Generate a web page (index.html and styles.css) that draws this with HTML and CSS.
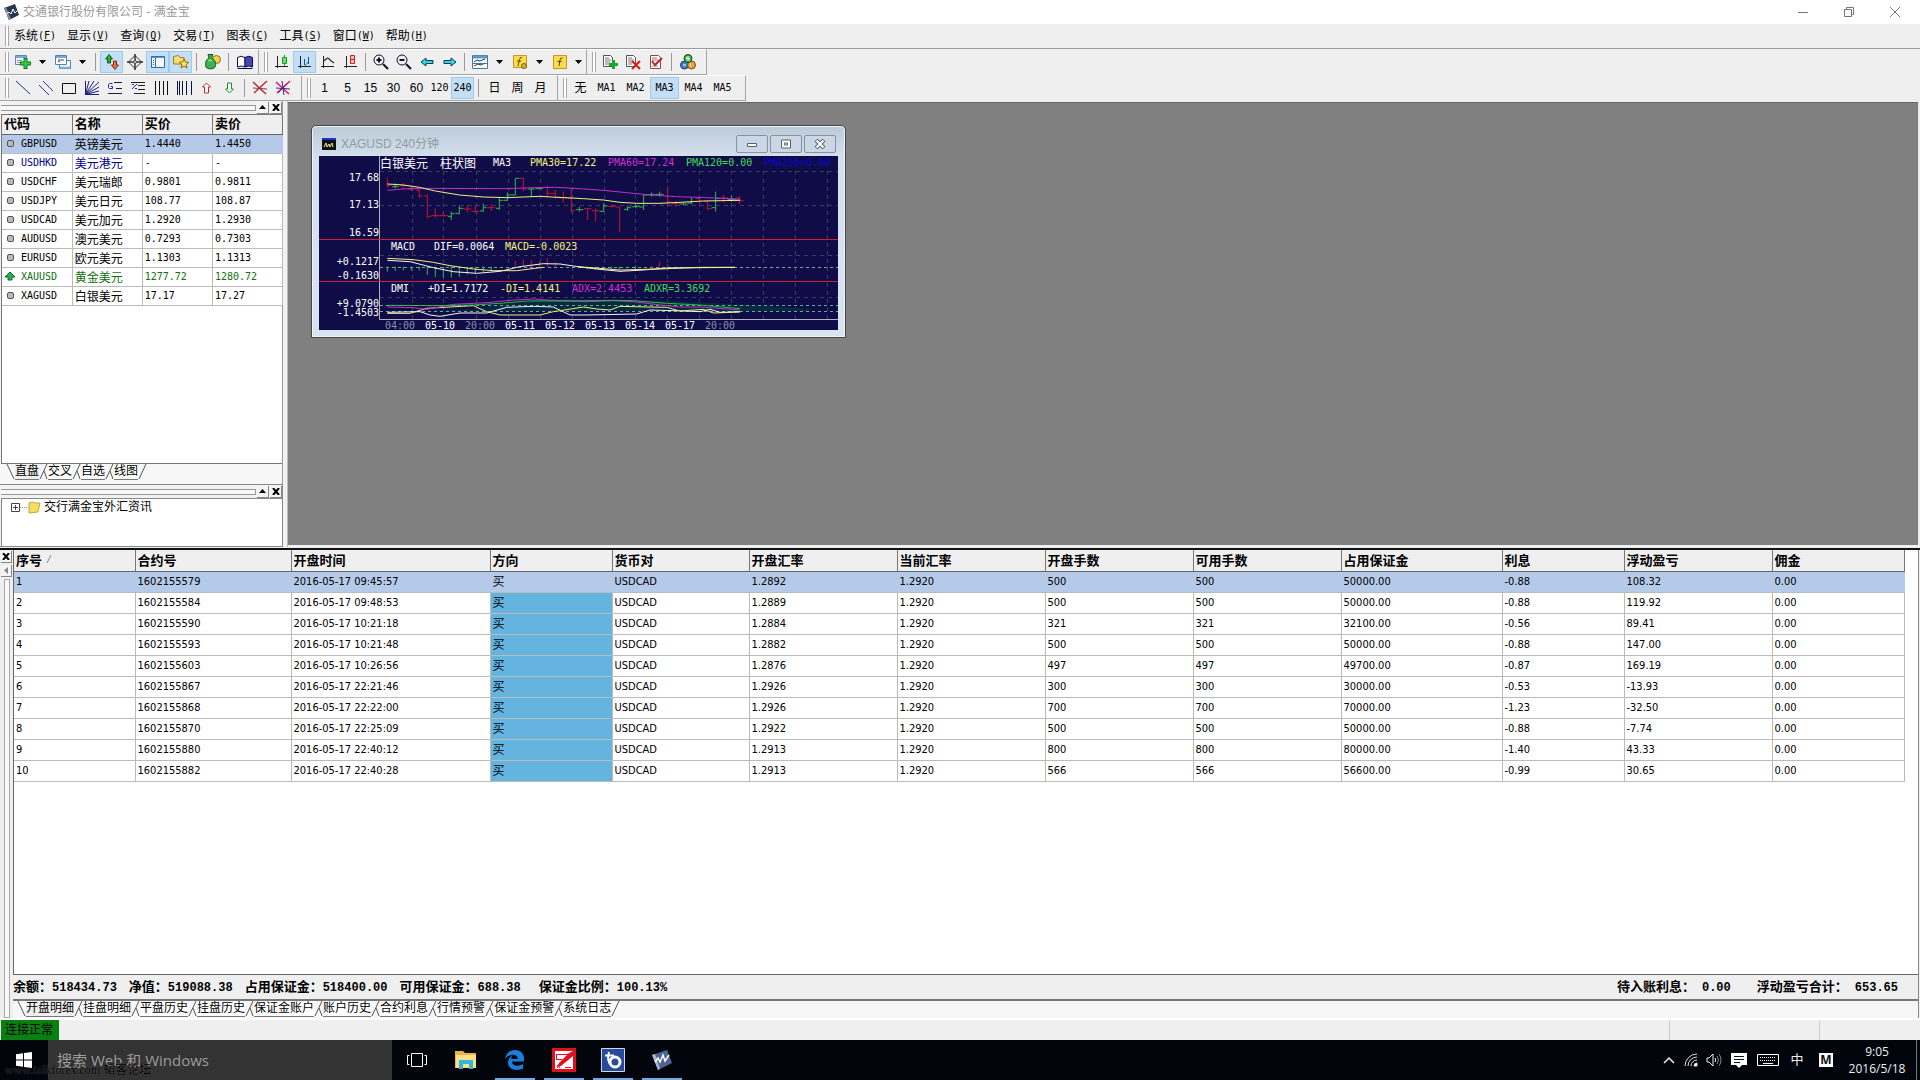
FILE: index.html
```html
<!DOCTYPE html>
<html lang="zh-CN">
<head>
<meta charset="utf-8">
<title>交通银行股份有限公司 - 满金宝</title>
<link rel="stylesheet" href="styles.css">
</head>
<body>
<header class="titlebar">
  <svg class="app-logo" width="18" height="18" viewBox="0 0 18 18"><path d="M2 5l11-4 4 11-10 5z" fill="#27374f"/><path d="M2 5l5 12 2-1L4 4z" fill="#7d8ba3"/><path d="M4 11l3-2 2 2 2-5 2 4 3-3" fill="none" stroke="#fff"/></svg>
  <span class="title-text">交通银行股份有限公司 - 满金宝</span>
  <div class="caption-buttons">
    <button aria-label="最小化"><svg width="12" height="12"><path d="M1 6.500h10" /></svg></button>
    <button aria-label="还原"><svg width="12" height="12"><path d="M1.500 3.500h7v7h-7zM3.500 3.500v-2h7v7h-2"/></svg></button>
    <button aria-label="关闭"><svg width="12" height="12"><path d="M1 1l10 10M11 1L1 11"/></svg></button>
  </div>
</header>

<nav class="menubar">
  <i class="grip"></i>
  <button>系统<span class="lat">(<u>F</u>)</span></button>
  <button>显示<span class="lat">(<u>V</u>)</span></button>
  <button>查询<span class="lat">(<u>Q</u>)</span></button>
  <button>交易<span class="lat">(<u>T</u>)</span></button>
  <button>图表<span class="lat">(<u>C</u>)</span></button>
  <button>工具<span class="lat">(<u>S</u>)</span></button>
  <button>窗口<span class="lat">(<u>W</u>)</span></button>
  <button>帮助<span class="lat">(<u>H</u>)</span></button>
</nav>

<div class="toolrow">
  <div class="toolbar tb-file">
    <i class="grip"></i>
    <button class="tool" aria-label="新建图表"><svg class="ic" viewBox="0 0 16 16"><path d="M.5 1.500h11v9H.5z" fill="#f4f8fc" stroke="#5b87b5"/><path d="M1 3h10" stroke="#7aa6d6" stroke-width="2"/><path d="M2 6.500h5M2 8.500h3" stroke="#88a"/><path d="M5 9.500h11M10.500 4v11" stroke="#0c7a1c" stroke-width="4"/><path d="M6 9.500h9M10.500 5v9" stroke="#35cf45" stroke-width="2"/></svg></button>
    <button class="drop" aria-label="更多"><svg width="7" height="4"><path d="M0 0h7L3.500 4z"/></svg></button>
    <button class="tool" aria-label="窗口"><svg class="ic" viewBox="0 0 16 16" stroke="#4f83b4" fill="#fff"><path d="M4.500 6.500h11v8h-11z"/><path d="M5 13.500h10" stroke="#8bb8e0" stroke-width="2"/><path d="M.5 1.500h11v9H.5z"/><path d="M1 3h10" stroke="#7aa6d6" stroke-width="2"/><path d="M3 6h6M3 8l2-1" stroke="#446"/></svg></button>
    <button class="drop" aria-label="更多"><svg width="7" height="4"><path d="M0 0h7L3.500 4z"/></svg></button>
    <i class="sep"></i>
    <button class="tool on" aria-label="行情"><svg class="ic" viewBox="0 0 16 16"><path d="M5 .5l3.500 4.500H6.500v4h-3V5h-2z" fill="#27ac35" stroke="#145d1c"/><path d="M11 15.500l3.500-4.500h-2V7h-3v4h-2z" fill="#e8703c" stroke="#8a2c10"/></svg></button>
    <button class="tool" aria-label="十字光标"><svg class="ic" viewBox="0 0 16 16" fill="none" stroke="#333"><path d="M8 1.500L14.500 8 8 14.500 1.500 8z"/><path d="M8 0v6M8 10v6M0 8h6M10 8h6" stroke-width="1.500"/><circle cx="8" cy="8" r="1.500"/></svg></button>
    <button class="tool on" aria-label="列表"><svg class="ic" viewBox="0 0 16 16"><path d="M1.500 2.500h13v11h-13z" fill="#f3f8ff" stroke="#2c6ea8"/><path d="M2 3.500h12" stroke="#5b9ad0"/><path d="M5.500 4v9" stroke="#2c6ea8"/><path d="M3 6.500h1M3 8.500h1M3 10.500h1" stroke="#555"/></svg></button>
    <button class="tool on" aria-label="收藏"><svg class="ic" viewBox="0 0 16 16"><path d="M.5 10V2.500l5-1L7 3.500h4V10z" fill="#f6dd7a" stroke="#9c8123"/><path d="M11 5l1.400 3 3.300.3-2.500 2.300.8 3.400-3-1.800L8 14l.8-3.400L6.300 8.300 9.600 8z" fill="#ffe44a" stroke="#8a6c12"/></svg></button>
    <i class="sep"></i>
    <button class="tool" aria-label="资金"><svg class="ic" viewBox="0 0 16 16"><circle cx="11.500" cy="5.500" r="4" fill="#f2d24a" stroke="#8b7316"/><path d="M3 .5h5L6.500 4c4 2 5 6 3.500 9-2 2.500-7 2.500-9 0-1-3-.5-7 3-9z" fill="#3fb04f" stroke="#155a20"/><path d="M3 7q2-2 4 0" stroke="#b9f0b9" fill="none"/></svg></button>
    <i class="sep"></i>
    <button class="tool" aria-label="手册"><svg class="ic" viewBox="0 0 16 16" stroke="#0d0d4a"><path d="M.5 3.500Q4 1 8 3.500v9.500q-4-2-7.500 0z" fill="#fff"/><path d="M8 3.500Q12 1 15.500 3.500V13Q12 11 8 13z" fill="#4545b5"/><path d="M.5 14.500h15" /></svg></button>
  </div>
  <div class="toolbar tb-chart">
    <i class="grip"></i>
    <button class="tool" aria-label="蜡烛图"><svg class="ic" viewBox="0 0 16 16" fill="none" stroke="#222"><path d="M3.500 2v12M1 12.500h13" /><path d="M10.500 1v11" stroke="#14a02a"/><path d="M8.500 3.500h4v6h-4z" fill="#5fe06f" stroke="#14a02a"/></svg></button>
    <button class="tool on" aria-label="柱状图"><svg class="ic" viewBox="0 0 16 16" fill="none" stroke="#222"><path d="M3.500 2v12M1 12.500h13"/><path d="M7.500 5v6h2M11.500 3v7M9.500 9h2" stroke="#155f7a"/></svg></button>
    <button class="tool" aria-label="线图"><svg class="ic" viewBox="0 0 16 16" fill="none" stroke="#222"><path d="M3.500 2v12M1 12.500h13"/><path d="M4 7q4-5 6-1l4 3" stroke="#2d4a2d" stroke-width="1.500"/></svg></button>
    <button class="tool" aria-label="美国线"><svg class="ic" viewBox="0 0 16 16" fill="none" stroke="#222"><path d="M3.500 2v12M1 12.500h13"/><path d="M7.500 1.500h4v8h-4zM7.500 5.500h4" stroke="#d02222" fill="#fbb"/></svg></button>
    <i class="sep"></i>
    <button class="tool" aria-label="放大"><svg class="ic" viewBox="0 0 16 16" fill="none" stroke="#101030"><circle cx="6" cy="6" r="5"/><path d="M3.500 6h5M6 3.500v5M10 10l5 5" stroke-width="2"/></svg></button>
    <button class="tool" aria-label="缩小"><svg class="ic" viewBox="0 0 16 16" fill="none" stroke="#101030"><circle cx="6" cy="6" r="5"/><path d="M3.500 6h5M10 10l5 5" stroke-width="2"/></svg></button>
    <button class="tool" aria-label="左移"><svg class="ic" viewBox="0 0 16 16"><path d="M2 8l5-4v2.500h7v3H7V12z" fill="#35d6e6" stroke="#063a44"/></svg></button>
    <button class="tool" aria-label="右移"><svg class="ic" viewBox="0 0 16 16"><path d="M14 8L9 4v2.500H2v3h7V12z" fill="#35d6e6" stroke="#063a44"/></svg></button>
    <i class="sep"></i>
    <button class="tool" aria-label="指标窗口"><svg class="ic" viewBox="0 0 16 16"><path d="M.5 1.500h15v13H.5z" fill="#fff" stroke="#3a79ad"/><path d="M1 3h14" stroke="#5b9ad0" stroke-width="3"/><path d="M2 8l3-2 3 1 5-2M2 12l4-2 3 1 4-2" fill="none" stroke="#333"/><path d="M1 9.500h14" stroke="#3a79ad"/></svg></button>
    <button class="drop" aria-label="更多"><svg width="7" height="4"><path d="M0 0h7L3.500 4z"/></svg></button>
    <button class="tool" aria-label="指标设置"><svg class="ic" viewBox="0 0 16 16"><path d="M1.500 1.500h13v12h-13z" fill="#f8dc4c" stroke="#c09a20"/><path d="M10 3.500q-2-.5-2.500 2L6 12M5 7h4" fill="none" stroke="#5a4508"/><circle cx="12" cy="12" r="2.500" fill="#d9b33a" stroke="#7a5c10"/></svg></button>
    <button class="drop" aria-label="更多"><svg width="7" height="4"><path d="M0 0h7L3.500 4z"/></svg></button>
    <button class="tool" aria-label="指标"><svg class="ic" viewBox="0 0 16 16"><path d="M1.500 1.500h13v13h-13z" fill="#f8dc4c" stroke="#c09a20"/><path d="M10.500 4q-2-.5-2.500 2L7 12M5.500 7.500h4" fill="none" stroke="#5a4508"/></svg></button>
    <button class="drop" aria-label="更多"><svg width="7" height="4"><path d="M0 0h7L3.500 4z"/></svg></button>
  </div>
  <div class="toolbar tb-order">
    <i class="grip"></i>
    <button class="tool" aria-label="新建委托"><svg class="ic" viewBox="0 0 16 16"><path d="M1.500 1.500h7l2 2v9h-9z" fill="#fff" stroke="#555"/><path d="M3 4h4M3 6h6M3 8h5M3 10h4" stroke="#777"/><path d="M7 10.500h9M11.500 6v9" stroke="#18a828" stroke-width="3"/></svg></button>
    <button class="tool" aria-label="撤销委托"><svg class="ic" viewBox="0 0 16 16"><path d="M1.500 1.500h7l2 2v9h-9z" fill="#fff" stroke="#555"/><path d="M3 4h4M3 6h6M3 8h5M3 10h4" stroke="#777"/><path d="M7 7l8 8M15 7l-8 8" stroke="#e01818" stroke-width="2"/></svg></button>
    <button class="tool" aria-label="确认委托"><svg class="ic" viewBox="0 0 16 16"><path d="M2.500 1.500h8l2 2v11h-10z" fill="#fff" stroke="#8a4a4a"/><path d="M4 4h5M4 6h6M4 12h6" stroke="#977"/><path d="M4 7l3 4 7-7" fill="none" stroke="#d01818" stroke-width="2"/></svg></button>
    <i class="sep"></i>
    <button class="tool" aria-label="货币"><svg class="ic" viewBox="0 0 16 16"><circle cx="4.500" cy="11" r="4" fill="#3f7fd0" stroke="#16386a"/><circle cx="11.500" cy="11" r="4" fill="#ee9b3a" stroke="#80480c"/><circle cx="8" cy="4.500" r="4" fill="#37ad48" stroke="#12551c"/><path d="M9.500 3h-3v1.500h3V6h-3M3 11h3M10.500 9.500v3" stroke="#fff" fill="none"/></svg></button>
  </div>
</div>

<div class="toolrow">
  <div class="toolbar tb-draw">
    <i class="grip"></i>
    <button class="tool" aria-label="趋势线"><svg class="ic" viewBox="0 0 16 16"><path d="M1 1l14 13" stroke="#22229a"/></svg></button>
    <button class="tool" aria-label="平行线"><svg class="ic" viewBox="0 0 16 16"><path d="M1 5l10 10M5 1l10 10" stroke="#333388"/></svg></button>
    <button class="tool" aria-label="矩形"><svg class="ic" viewBox="0 0 16 16"><path d="M1.500 3.500h13v10h-13z" fill="none" stroke="#111"/></svg></button>
    <button class="tool" aria-label="扇形线"><svg class="ic" viewBox="0 0 16 16" stroke="#1c1c80" fill="none"><path d="M1.500 1v13.500H15M1.500 14.500L5 1M1.500 14.500L10 1M1.500 14.500L15 2M1.500 14.500L15 7M1.500 14.500L15 11"/></svg></button>
    <button class="tool" aria-label="黄金分割"><svg class="ic" viewBox="0 0 16 16" fill="none" stroke="#222"><path d="M1 13.500h14M9 8.500h6M7 2.500h8"/><path d="M5.500 3.500H2.500l-1 1v3l1 1h3v-2H4" stroke="#2222b0"/></svg></button>
    <button class="tool" aria-label="百分比线"><svg class="ic" viewBox="0 0 16 16" fill="none" stroke="#222"><path d="M1 2.500h14M8 5.500h7M8 9.500h7M4 13.500h11"/><path d="M2 9l5-5M2 4.500h2M5 8.500h2" stroke="#2222b0"/></svg></button>
    <button class="tool" aria-label="周期线"><svg class="ic" viewBox="0 0 16 16"><path d="M2.500 1v14M6.500 1v14M10.500 1v14M14.500 1v14" stroke="#111"/></svg></button>
    <button class="tool" aria-label="斐波那契周期"><svg class="ic" viewBox="0 0 16 16"><path d="M1.500 1v14M3.500 1v14M6.500 1v14M10.500 1v14M15.500 1v14" stroke="#111144"/></svg></button>
    <button class="tool" aria-label="上箭头"><svg class="ic" viewBox="0 0 16 16"><path d="M7.500 3l4 4H9.500v6h-4V7h-2z" fill="#fff" stroke="#d02020"/></svg></button>
    <button class="tool" aria-label="下箭头"><svg class="ic" viewBox="0 0 16 16"><path d="M7.500 13l4-4H9.500V3h-4v6h-2z" fill="#fff" stroke="#149024"/></svg></button>
    <i class="sep"></i>
    <button class="tool" aria-label="删除"><svg class="ic" viewBox="0 0 16 16"><path d="M1 2l13 12M15 1L2 13" stroke="#d02030" stroke-width="1.500"/><path d="M1 8l14 1" stroke="#555"/></svg></button>
    <button class="tool" aria-label="全部删除"><svg class="ic" viewBox="0 0 16 16"><path d="M1 2l13 12M15 1L2 13" stroke="#d02060" stroke-width="1.500"/><path d="M1 8l14 1M7 1l2 14M3 13L12 4" stroke="#4a2090"/></svg></button>
  </div>
  <div class="toolbar tb-period">
    <i class="grip"></i>
    <button class="tool">1</button><button class="tool">5</button><button class="tool">15</button><button class="tool">30</button><button class="tool">60</button><button class="tool lat">120</button><button class="tool on lat">240</button>
    <i class="sep"></i>
    <button class="tool">日</button><button class="tool">周</button><button class="tool">月</button>
  </div>
  <div class="toolbar tb-ma">
    <i class="grip"></i>
    <button class="tool">无</button><button class="tool ma">MA1</button><button class="tool ma">MA2</button><button class="tool ma on">MA3</button><button class="tool ma">MA4</button><button class="tool ma">MA5</button>
  </div>
</div>

<main class="workspace">
  <aside class="side">
    <section class="quotes">
      <div class="dockbar"><i></i><button aria-label="收起"><svg width="7" height="4"><path d="M0 4h7L3.500 0z"/></svg></button><button aria-label="关闭"><svg width="8" height="7"><path d="M1 0l6 7M7 0L1 7" stroke="#000" stroke-width="2"/></svg></button></div>
      <div class="quote-list">
        <table class="qt">
          <thead><tr><th>代码</th><th>名称</th><th>买价</th><th>卖价</th></tr></thead>
          <tbody>
            <tr class="sel"><td><i class="dot"></i>GBPUSD</td><td>英镑美元</td><td>1.4440</td><td>1.4450</td></tr>
            <tr class="blue"><td><i class="dot"></i>USDHKD</td><td>美元港元</td><td>-</td><td>-</td></tr>
            <tr><td><i class="dot"></i>USDCHF</td><td>美元瑞郎</td><td>0.9801</td><td>0.9811</td></tr>
            <tr><td><i class="dot"></i>USDJPY</td><td>美元日元</td><td>108.77</td><td>108.87</td></tr>
            <tr><td><i class="dot"></i>USDCAD</td><td>美元加元</td><td>1.2920</td><td>1.2930</td></tr>
            <tr><td><i class="dot"></i>AUDUSD</td><td>澳元美元</td><td>0.7293</td><td>0.7303</td></tr>
            <tr><td><i class="dot"></i>EURUSD</td><td>欧元美元</td><td>1.1303</td><td>1.1313</td></tr>
            <tr class="green"><td><svg class="up" width="12" height="10"><path d="M6 1l5 5H8v3H4V6H1z" fill="#28b050" stroke="#0c6a28"/></svg>XAUUSD</td><td>黄金美元</td><td>1277.72</td><td>1280.72</td></tr>
            <tr><td><i class="dot"></i>XAGUSD</td><td>白银美元</td><td>17.17</td><td>17.27</td></tr>
          </tbody>
        </table>
      </div>
      <div class="tabs side-tabs">
        <svg class="cut" width="9" height="16"><path d="M1 0l7 15"/></svg><button class="active">直盘</button><svg class="cut" width="9" height="16"><path d="M8 0L1 15M5 7l3 8"/></svg><button>交叉</button><svg class="cut" width="9" height="16"><path d="M8 0L1 15M5 7l3 8"/></svg><button>自选</button><svg class="cut" width="9" height="16"><path d="M8 0L1 15M5 7l3 8"/></svg><button>线图</button><svg class="cut" width="9" height="16"><path d="M8 0L1 15"/></svg>
      </div>
    </section>
    <section class="news">
      <div class="dockbar"><i></i><button aria-label="收起"><svg width="7" height="4"><path d="M0 4h7L3.500 0z"/></svg></button><button aria-label="关闭"><svg width="8" height="7"><path d="M1 0l6 7M7 0L1 7" stroke="#000" stroke-width="2"/></svg></button></div>
      <div class="tree">
        <svg width="32" height="16"><path d="M1.500 4.500h8v8h-8zM3 8.500h5M5.500 6v5" fill="#fff" stroke="#444"/><path d="M10 8.500h8" stroke="#999" stroke-dasharray="1 1"/><path d="M19 4l4-1 1 1h6l-2 9-9 1z" fill="#f5dc62" stroke="#c2a83e"/></svg>
        <span>交行满金宝外汇资讯</span>
      </div>
    </section>
  </aside>
  <section class="mdi">
    <div class="child">
      <header class="child-title">
        <svg width="14" height="12"><path d="M0 0h14v12H0z" fill="#111"/><path d="M0 0h14v2H0z" fill="#2233cc"/><path d="M2 9l2-4 1 4 2-3 1 3 2-4 1 4" fill="none" stroke="#f5e6a0"/></svg>
        <span>XAGUSD 240分钟</span>
        <button aria-label="最小化"><svg width="12" height="10"><path d="M1.500 4.500h9v3h-9z" fill="#fff" stroke="#555e6b"/></svg></button>
        <button aria-label="最大化"><svg width="12" height="10"><path d="M1.500 1h9v8h-9z" fill="#fff" stroke="#555e6b"/><path d="M4.500 4h3v2h-3z" fill="#fff" stroke="#555e6b"/></svg></button>
        <button aria-label="关闭"><svg width="12" height="10"><path d="M2 1l8 8M10 1L2 9" stroke="#555e6b" stroke-width="4"/><path d="M2.500 1.500l7 7M9.500 1.500l-7 7" stroke="#fff" stroke-width="2"/></svg></button>
      </header>
      <svg class="chart" viewBox="0 0 519 174" role="img" aria-label="白银美元 柱状图">
        <g class="grid"><path d="M93.500 15v148M124.500 15v148M157.500 15v148M189.500 15v148M221.500 15v148M253.500 15v148M285.500 15v148M316.500 15v148M348.500 15v148M380.500 15v148M412.500 15v148M444.500 15v148M476.500 15v148M508.500 15v148M61 15.500h458M61 49.500h458M61 99.500h458M61 141.500h458"/></g>
        <path d="M181 148l60-5 110 2 80 4 60 4v2H100l60-2z" fill="#082a40"/>
        <path class="zero" d="M61 111.500h458M61 149.500h458M61 155.500h458"/>
        <path class="axis" d="M60.500 0v163.500H519"/>
        <path class="split" d="M0 83.500h519M0 125.500h519"/>
        <g class="plot" transform="translate(-19 -41) scale(.333333)">
          <path class="r" d="M262 188v30M262 212h10M310 205v17M300 212h20M334 210v18M324 222h20M358 218v30M348 225h10M358 243h10M382 238v72M372 243h10M382 304h12M406 280v28M394 302h24M430 290v15M418 302h26M502 270v22M490 282h24M526 270v23M514 289h24M574 268v20M562 278h24M670 188v40M660 190h10M670 222h10M742 212v33M732 217h10M742 235h12M766 225v27M754 235h12M766 246h12M790 230v32M778 248h24M814 222v70M804 250h10M814 286h12M863 280v35M852 281h22M887 280v40M876 287h22M935 270v8M923 274h24M959 275v75M947 276h12M1103 215v55M1103 260h10M1127 258v17M1115 266h24M1199 245v20M1187 250h12M1223 258v27M1212 259h11M1223 281h12M1271 240v22M1260 249h24M1319 243v25M1307 249h12M1319 257h12"/>
          <path class="g" d="M286 205v15M276 215h20M454 290v25M444 304h10M454 296h10M478 272v26M466 295h12M478 280h12M550 266v24M540 288h10M550 278h10M598 248v37M588 280h10M598 256h10M622 232v26M610 256h12M622 240h12M646 190v50M634 240h12M646 190h12M694 220v25M684 222h22M718 218v4M708 221h20M838 275v15M828 284h22M911 265v25M899 289h12M911 273h10M983 273v15M972 283h12M983 278h10M1007 268v12M995 275h24M1031 240v45M1019 276h12M1031 240h12M1055 232v13M1043 239h24M1079 230v15M1067 238h24M1151 262v8M1139 267h24M1175 248v20M1163 264h12M1247 230v60M1235 278h12M1247 250h12M1295 242v18M1283 253h24"/>
          <path class="m" d="M262 226l48-4 50-2 260 1 80-3 70-1 70 4 70 5 70 7 70 7 80 5 120 4 70 4"/>
          <path class="y" d="M262 207l48 3 48 7 48 11 72 12 72 6 72 2 48-2 50-2 50 3 45 2 35 2 60 4 50 7 50 3h70l60-3 70-4 110-2"/>
          <path class="g" d="M262 455v15M286 455v13M310 455v11M334 455v12M358 455v11M382 455v25M406 455v31M430 455v33M454 455v33M478 455v31M502 455v23M526 455v19M550 455v16M574 455v12M862 455v8M886 455v10M934 455v8M958 455v8M1006 452v12"/>
          <path class="r" d="M646 455v-17M670 455v-22M694 455v-20M718 455v-15M742 455v-25M766 455v-15M1055 462v-10M1079 462v-22M1103 458v-10"/>
          <path class="w" d="M262 436l68 4 70 18 60 12 70 5 70-6 60-14 70-9 50 1 60 9 60 7 60 6 70-4 70-6 205-2"/>
          <path class="y" d="M262 430l78 4 60 8 50 10 70 10 60 5h70l80-10M834 455l126 10 120-3 120-5h105"/>
          <path class="w" d="M262 592l98-2 30 10 30 4 60-10h80l60-17 80-3 60 2 50 24h50l150-3 40-12 100 3 50 2 30-7 30 9 60-2"/>
          <path class="y" d="M262 595h68l50-15 140-8 40 18 40 10h120l40-10 40-6 50-8 40 6 40 3 30-11 80 2 60 1 40 11 70-5 30 11 80-3"/>
          <path class="m" d="M262 576l78 2 40 5 80-15 100-5 80-8 60-3 60 4 100 4 80-3 60 3 80 10 60 6h60l120 9"/>
          <path class="g" d="M262 571l138 1 120-2 80-5 80-7h130l130-2 60 1 100 8 100 5 120 11"/>
        </g>
        <g class="cjk"><text x="61" y="12">白银美元</text><text x="121" y="12">柱状图</text></g>
        <g class="lbl">
          <text x="174" y="10">MA3</text><text class="ty" x="211" y="10">PMA30=17.22</text><text class="tm" x="289" y="10">PMA60=17.24</text><text class="tg" x="367" y="10">PMA120=0.00</text><text class="tb" x="445" y="10">PMA250=0.00</text>
          <text x="72" y="94">MACD</text><text x="115" y="94">DIF=0.0064</text><text class="ty" x="186" y="94">MACD=-0.0023</text>
          <text x="72" y="136">DMI</text><text x="109" y="136">+DI=1.7172</text><text class="ty" x="181" y="136">-DI=1.4141</text><text class="tm" x="253" y="136">ADX=2.4453</text><text class="tg" x="325" y="136">ADXR=3.3692</text>
          <g text-anchor="end"><text x="60" y="25">17.68</text><text x="60" y="52">17.13</text><text x="60" y="80">16.59</text><text x="60" y="109">+0.1217</text><text x="60" y="123">-0.1630</text><text x="60" y="151">+9.0790</text><text x="60" y="160">-1.4503</text></g>
          <text class="dim" x="66" y="173">04:00</text><text x="106" y="173">05-10</text><text class="dim" x="146" y="173">20:00</text><text x="186" y="173">05-11</text><text x="226" y="173">05-12</text><text x="266" y="173">05-13</text><text x="306" y="173">05-14</text><text x="346" y="173">05-17</text><text class="dim" x="386" y="173">20:00</text>
        </g>
      </svg>
    </div>
  </section>
</main>

<section class="orders">
  <div class="dockside"><button aria-label="关闭"><svg width="8" height="7"><path d="M1 0l6 7M7 0L1 7" stroke="#000" stroke-width="2"/></svg></button><button aria-label="收起"><svg width="4" height="7"><path d="M4 0v7L0 3.500z" fill="#888"/></svg></button><i></i></div>
  <div class="orders-body">
    <div class="grid-wrap">
      <table class="ot">
        <colgroup><col class="c1"><col class="c2"><col class="c3"><col class="c4"><col class="c5"><col class="c6"><col class="c7"><col class="c8"><col class="c9"><col class="c10"><col class="c11"><col class="c12"><col></colgroup>
        <thead><tr><th>序号<svg class="sort" width="8" height="8"><path d="M1 8l4-8" stroke="#888"/></svg></th><th>合约号</th><th>开盘时间</th><th>方向</th><th>货币对</th><th>开盘汇率</th><th>当前汇率</th><th>开盘手数</th><th>可用手数</th><th>占用保证金</th><th>利息</th><th>浮动盈亏</th><th>佣金</th></tr></thead>
        <tbody>
          <tr class="sel"><td>1</td><td>1602155579</td><td>2016-05-17 09:45:57</td><td>买</td><td>USDCAD</td><td>1.2892</td><td>1.2920</td><td>500</td><td>500</td><td>50000.00</td><td>-0.88</td><td>108.32</td><td>0.00</td></tr>
          <tr><td>2</td><td>1602155584</td><td>2016-05-17 09:48:53</td><td>买</td><td>USDCAD</td><td>1.2889</td><td>1.2920</td><td>500</td><td>500</td><td>50000.00</td><td>-0.88</td><td>119.92</td><td>0.00</td></tr>
          <tr><td>3</td><td>1602155590</td><td>2016-05-17 10:21:18</td><td>买</td><td>USDCAD</td><td>1.2884</td><td>1.2920</td><td>321</td><td>321</td><td>32100.00</td><td>-0.56</td><td>89.41</td><td>0.00</td></tr>
          <tr><td>4</td><td>1602155593</td><td>2016-05-17 10:21:48</td><td>买</td><td>USDCAD</td><td>1.2882</td><td>1.2920</td><td>500</td><td>500</td><td>50000.00</td><td>-0.88</td><td>147.00</td><td>0.00</td></tr>
          <tr><td>5</td><td>1602155603</td><td>2016-05-17 10:26:56</td><td>买</td><td>USDCAD</td><td>1.2876</td><td>1.2920</td><td>497</td><td>497</td><td>49700.00</td><td>-0.87</td><td>169.19</td><td>0.00</td></tr>
          <tr><td>6</td><td>1602155867</td><td>2016-05-17 22:21:46</td><td>买</td><td>USDCAD</td><td>1.2926</td><td>1.2920</td><td>300</td><td>300</td><td>30000.00</td><td>-0.53</td><td>-13.93</td><td>0.00</td></tr>
          <tr><td>7</td><td>1602155868</td><td>2016-05-17 22:22:00</td><td>买</td><td>USDCAD</td><td>1.2926</td><td>1.2920</td><td>700</td><td>700</td><td>70000.00</td><td>-1.23</td><td>-32.50</td><td>0.00</td></tr>
          <tr><td>8</td><td>1602155870</td><td>2016-05-17 22:25:09</td><td>买</td><td>USDCAD</td><td>1.2922</td><td>1.2920</td><td>500</td><td>500</td><td>50000.00</td><td>-0.88</td><td>-7.74</td><td>0.00</td></tr>
          <tr><td>9</td><td>1602155880</td><td>2016-05-17 22:40:12</td><td>买</td><td>USDCAD</td><td>1.2913</td><td>1.2920</td><td>800</td><td>800</td><td>80000.00</td><td>-1.40</td><td>43.33</td><td>0.00</td></tr>
          <tr><td>10</td><td>1602155882</td><td>2016-05-17 22:40:28</td><td>买</td><td>USDCAD</td><td>1.2913</td><td>1.2920</td><td>566</td><td>566</td><td>56600.00</td><td>-0.99</td><td>30.65</td><td>0.00</td></tr>
        </tbody>
      </table>
    </div>
    <div class="summary">
      <span>余额：<b>518434.73</b></span><span>净值：<b>519088.38</b></span><span>占用保证金：<b>518400.00</b></span><span>可用保证金：<b>688.38</b></span><span class="ratio">保证金比例：<b>100.13%</b></span>
      <span class="push">待入账利息：<b>0.00</b></span><span class="last">浮动盈亏合计：<b>653.65</b></span>
    </div>
    <div class="tabs">
      <svg class="cut" width="9" height="16"><path d="M1 0l7 15"/></svg><button class="active">开盘明细</button><svg class="cut" width="9" height="16"><path d="M8 0L1 15M5 7l3 8"/></svg><button>挂盘明细</button><svg class="cut" width="9" height="16"><path d="M8 0L1 15M5 7l3 8"/></svg><button>平盘历史</button><svg class="cut" width="9" height="16"><path d="M8 0L1 15M5 7l3 8"/></svg><button>挂盘历史</button><svg class="cut" width="9" height="16"><path d="M8 0L1 15M5 7l3 8"/></svg><button>保证金账户</button><svg class="cut" width="9" height="16"><path d="M8 0L1 15M5 7l3 8"/></svg><button>账户历史</button><svg class="cut" width="9" height="16"><path d="M8 0L1 15M5 7l3 8"/></svg><button>合约利息</button><svg class="cut" width="9" height="16"><path d="M8 0L1 15M5 7l3 8"/></svg><button>行情预警</button><svg class="cut" width="9" height="16"><path d="M8 0L1 15M5 7l3 8"/></svg><button>保证金预警</button><svg class="cut" width="9" height="16"><path d="M8 0L1 15M5 7l3 8"/></svg><button>系统日志</button><svg class="cut" width="9" height="16"><path d="M8 0L1 15"/></svg>
    </div>
  </div>
</section>

<footer class="statusbar"><span class="conn">连接正常</span><i class="pane wide"></i><i class="pane"></i></footer>

<div class="taskbar">
  <button class="start" aria-label="开始"><svg width="16" height="16" fill="#fff"><path d="M0 2.300L7 1.300v6.200H0zM8 1.100L16 0v7.500H8zM0 8.500h7v6.200l-7-1zM8 8.500h8V16l-8-1.100z"/></svg></button>
  <input class="search" type="text" aria-label="搜索" placeholder="搜索 Web 和 Windows">
  <button class="task" aria-label="任务视图"><svg width="20" height="16" fill="none" stroke="#fff"><path d="M4.500 1.500h11v13h-11zM2.500 3.500h-2v9h2M17.500 3.500h2v9h-2"/></svg></button>
  <button class="task" aria-label="文件资源管理器"><svg width="22" height="20"><path d="M0 1h8l2 2h11v15H0z" fill="#e8b64c"/><path d="M1 5h20v13H1z" fill="#fbe08a"/><path d="M4 10h14v9h-4v-5H8v5H4z" fill="#35b5d8"/></svg></button>
  <button class="task run" aria-label="Edge"><svg width="22" height="22"><path d="M1 10C2 4 6 1 11 1c6 0 9 4 9 9v2.500H8c.3 5 6.500 5 11 2.500v4.500c-6 3-15 1.500-15-6 0-4 2.500-6 5-7-1.500 1.500-1.700 2.500-1.700 3.500h6.500c0-6-8.800-5.500-12.800 0z" fill="#1a7fdc"/></svg></button>
  <button class="task run" aria-label="行情软件"><svg width="24" height="24"><path d="M0 0h24v24H0z" fill="#e01020"/><path d="M3 3h18v18H3z" fill="#fff"/><path d="M4 6.500h12M4.500 6v5M4 11.500h6M5 17l3 3M8 17l-3 3M13 19.500h6" stroke="#e01020"/><path d="M21 3v5L9 18l-4 1 2-4L17 5z" fill="#e01020"/></svg></button>
  <button class="task run" aria-label="交通银行"><svg width="24" height="24"><path d="M.5.500h23v23H.5z" fill="#274a9c" stroke="#cfd9ee"/><path d="M4 7.500h9M8 4q-3 9 3 14" fill="none" stroke="#fff" stroke-width="2"/><circle cx="14" cy="14" r="5" fill="none" stroke="#fff" stroke-width="3"/></svg></button>
  <button class="task run" aria-label="满金宝"><svg width="22" height="22"><path d="M1 6l15-5 5 13-14 7z" fill="#4d6594"/><path d="M1 6l6 15 2-1L4 5z" fill="#a8b7d2"/><path d="M4 13l3-4 2 4 3-7 2 6 4-6" fill="none" stroke="#fff" stroke-width="1.500"/></svg></button>
  <div class="tray">
    <svg width="14" height="24"><path d="M2 15l5-5 5 5" fill="none" stroke="#eee" stroke-width="1.500"/></svg>
    <svg width="14" height="24" fill="none" stroke="#ddd"><path d="M1 18A12 12 0 0 1 13 6M4 18a9 9 0 0 1 9-9M7 18a6 6 0 0 1 6-6"/><path d="M10 18a3 3 0 0 1 3-3v3z" fill="#fff"/></svg>
    <svg width="16" height="24" fill="none" stroke="#eee"><path d="M1 10h2l4-4v12l-4-4H1zM9 10q1.500 2 0 4"/><path d="M11 8q3 4 0 8M13 6q4 6 0 12" stroke="#888"/></svg>
    <svg width="18" height="24"><path d="M1 5h16v12h-5l-3 3-3-3H1z" fill="#fff"/><path d="M4 8.500h10M4 11.500h10M4 14.500h6" stroke="#111"/></svg>
    <svg width="24" height="24" fill="none" stroke="#fff"><path d="M1.500 6.500h21v11h-21z"/><path d="M4 9.500h16M4 12.500h16" stroke-dasharray="1 1"/><path d="M7 15.500h10"/></svg>
    <span class="ime">中</span>
    <span class="imode">M</span>
    <div class="clock"><span>9:05</span><span>2016/5/18</span></div>
    <i class="peek"></i>
  </div>
  <span class="mark">www.talkforex.com 韬客论坛</span>
</div>
</body>
</html>
```
FILE: styles.css
```css
* { box-sizing: border-box; }
body { margin: 0; height: 100vh; display: flex; flex-direction: column; overflow: hidden; background: #efefef; color: #000; font: 12px/16px "Liberation Sans", "Noto Sans CJK SC", sans-serif; }
button { display: flex; align-items: center; justify-content: center; margin: 0; padding: 0; border: 0; background: none; color: inherit; font: inherit; white-space: nowrap; flex: none; }
svg { display: block; flex: none; }
table { border-collapse: collapse; table-layout: fixed; }
th, td { padding: 0; text-align: left; white-space: nowrap; overflow: hidden; }
.lat { font-family: "DejaVu Sans Mono", monospace; font-size: 10px; }

.titlebar { display: flex; align-items: center; flex: none; height: 24px; background: #fff; color: #999; }
.app-logo { margin: 0 3px 0 2px; }
.caption-buttons { display: flex; margin-left: auto; padding-right: 2px; }
.caption-buttons button { width: 46px; height: 20px; }
.caption-buttons svg { fill: none; stroke: #777; }

.menubar { display: flex; align-items: center; gap: 11px; flex: none; height: 25px; border-bottom: 1px solid #999; }
.menubar .grip { margin-right: -6px; }
.grip { flex: none; width: 4px; height: 20px; margin: 0 2px 0 5px; border: solid #a8a8a8; border-width: 0 1px; background: #fff; }

.toolrow { display: flex; flex: none; height: 26px; }
.toolbar { display: flex; align-items: center; flex: none; height: 26px; border: solid #a5a5a5; border-width: 0 1px 1px 0; border-top: 1px solid #fff; }
.tool { width: 23px; height: 22px; border: 1px solid transparent; }
.tool.on { background: #c4dff5; border-color: #9ccbf0; }
.ic { width: 16px; height: 16px; }
.drop { width: 17px; height: 22px; }
.sep { flex: none; width: 1px; height: 18px; margin: 0 4px; background: #999; }
.tb-file { width: 259px; }
.tb-chart { width: 328px; }
.tb-chart .sep, .tb-draw .sep { margin: 0 3px; }
.tb-chart .drop:last-child { flex: 0 1 17px; }
.tb-order { width: 120px; }
.tb-draw { width: 302px; }
.tb-period { width: 256px; }
.tb-ma { width: 188px; }
.tool.ma { width: 29px; font: 10px/16px "DejaVu Sans Mono", monospace; }

.workspace { display: flex; flex: none; height: 446px; }
.side { display: flex; flex-direction: column; flex: none; width: 288px; padding-right: 4px; border-right: 1px solid #bbb; background: #f2f2f2; }
.quotes { display: flex; flex-direction: column; flex: 1; border-right: 1px solid #999; }
.news { display: flex; flex-direction: column; flex: none; height: 63px; border: 1px solid #888; border-left: 0; }
.dockbar { display: flex; align-items: center; flex: none; height: 13px; }
.dockbar i { flex: 1; height: 6px; margin-left: 1px; border: 1px solid #999; border-left: 0; background: #f8f8f8; }
.dockbar button { width: 12px; height: 12px; margin-left: 1px; border: solid #888; border-width: 0 1px 1px 0; background: #f4f4f4; }
.quote-list { flex: 1; margin-left: 1px; border: solid #777; border-width: 1px 0 1px 1px; background: #fff; }
.qt { width: 281px; }
.qt th { height: 19px; padding-left: 2px; font-size: 13px; line-height: 16px; background: #efefef; border-right: 1px solid #777; border-bottom: 1px solid #666; }
.qt td { height: 19px; padding-left: 2px; font: 10px/16px "DejaVu Sans Mono", monospace; border-right: 1px solid #bbb; border-bottom: 1px solid #bbb; }
.qt td:nth-child(2) { font: 12px/16px "Noto Sans CJK SC", sans-serif; }
.qt .sel td, .ot .sel td { background: #b5c9e8; border-right-color: #b5c9e8; }
.blue { color: #000090; }
.green { color: #107010; }
.dot { display: inline-block; width: 7px; height: 7px; margin: 0 7px 0 3px; border: 1px solid #555; border-radius: 2px; background: #bbb; }
.up { display: inline-block; margin: 0 5px 0 0; vertical-align: -1px; }

.tabs { display: flex; align-items: flex-start; flex: none; background: #f7f7f7; }
.tabs button { height: 16px; line-height: 15px; background: #fff; border-bottom: 1px solid #777; }
.tabs .active { background: #efefef; }
.cut { fill: none; stroke: #555; }
.side-tabs { height: 20px; padding-left: 6px; }
.tree { display: flex; flex: 1; padding: 0 0 0 10px; gap: 2px; margin-left: 1px; border: solid #888; border-width: 1px 0 0 1px; background: #fff; }
.tree svg { margin-left: -2px; }

.mdi { position: relative; flex: 1; margin: 1px 2px 2px 0; background: #808080; border-top: 1px solid #666; }
.child { position: absolute; left: 23px; top: 22px; width: 535px; padding: 0 7px 7px; background: linear-gradient(#bccad8, #d3dfec 31px, #d8e4f2); border: 1px solid #44484e; border-radius: 5px 5px 0 0; box-shadow: inset 0 0 0 1px #eef4fa; }
.child-title { display: flex; align-items: center; gap: 2px; height: 30px; padding: 6px 2px 0 3px; color: #949ba3; font-size: 12px; }
.child-title span { flex: 1; padding-left: 3px; }
.child-title button { width: 32px; height: 18px; border: 1px solid #8593a3; border-radius: 2px; background: #cbd7e4; }
.chart { width: 100%; overflow: visible; background: #100c48; }
.grid { fill: none; stroke: #3c3c60; stroke-dasharray: 4 4; }
.zero { stroke: #5fae9a; stroke-dasharray: 3 3; }
.axis { fill: none; stroke: #b0b0c0; }
.split { stroke: #d01c34; shape-rendering: crispEdges; }
.plot { fill: none; stroke-width: 3; }
.r { stroke: #c01830; } .g { stroke: #2fb848; } .y { stroke: #efef80; } .m { stroke: #c030c8; } .w { stroke: #f4f4f4; }
.lbl { fill: #fff; font: 10px "DejaVu Sans Mono", monospace; }
.cjk { fill: #fff; font: 12px "Noto Sans CJK SC", sans-serif; }
.ty { fill: #f4f478; } .tm { fill: #d030d0; } .tg { fill: #40dc58; } .tb { fill: #0808c8; } .dim { fill: #8c8ca4; }

.orders { display: flex; flex: 1; min-height: 0; border-top: 2px solid #111; margin-top: 1px; }
.dockside { display: flex; flex-direction: column; align-items: center; gap: 2px; flex: none; width: 13px; padding-top: 1px; }
.dockside button { width: 11px; height: 12px; border: solid #888; border-width: 0 1px 1px 0; background: #f4f4f4; }
.dockside i { flex: 1; width: 6px; border: 1px solid #aaa; background: #f8f8f8; }
.orders-body { display: flex; flex-direction: column; flex: 1; min-width: 0; margin-right: 1px; border-right: 1px solid #888; }
.grid-wrap { flex: 1; min-height: 0; padding-right: 13px; background: #fff; border: solid #666; border-width: 0 0 1px 1px; }
.ot { width: 100%; }
.ot th { height: 21px; padding: 2px 0 0 2px; font-size: 13px; line-height: 18px; background: #efefef; border-right: 1px solid #777; border-bottom: 1px solid #666; }
.ot td { height: 21px; padding-left: 2px; font: 11px/16px "DejaVu Sans Condensed", "Noto Sans CJK SC", sans-serif; border-right: 1px solid #bbb; border-bottom: 1px solid #bbb; }
.ot td:nth-child(4) { font-size: 12px; background: #65b4e0; }
.ot .sel td:nth-child(4) { background: #b5c9e8; }
.sort { display: inline-block; margin-left: 4px; vertical-align: 2px; }
.c1 { width: 121px; } .c2 { width: 156px; } .c3 { width: 199px; } .c4 { width: 122px; } .c5 { width: 137px; } .c6 { width: 148px; } .c7 { width: 148px; } .c8 { width: 148px; } .c9 { width: 148px; } .c10 { width: 161px; } .c11 { width: 122px; } .c12 { width: 148px; }
.summary { display: flex; align-items: center; gap: 12px; flex: none; height: 26px; padding-right: 20px; font-size: 13px; font-weight: bold; border-bottom: 2px solid #777; }
.summary b { font: bold 12px/16px "Liberation Mono", monospace; }
.ratio { margin-left: 6px; }
.push { margin-left: auto; }
.last { margin-left: 14px; }
.push b, .last b { margin-left: 7px; }
.orders .tabs { padding-left: 4px; height: 17px; }

.statusbar { display: flex; flex: none; height: 22px; border-top: 2px solid #fff; }
.conn { width: 58px; padding-left: 4px; margin-left: 1px; background: #0a8010; line-height: 20px; }
.pane { width: 150px; margin-top: 1px; border-left: 1px solid #c8c8c8; }
.pane:last-child { width: 101px; }
.pane.wide { margin-left: auto; }

.taskbar { position: relative; display: flex; align-items: stretch; flex: none; height: 40px; background: #02050c; color: #eee; }
.start { width: 48px; }
.search { width: 344px; margin: 0; padding: 0 9px; border: 0; background: #333; color: #ddd; font: 15px "Open Sans", "Noto Sans CJK SC", sans-serif; }
.search::placeholder { color: #9c9c9c; opacity: 1; }
.task { width: 49px; padding-top: 2px; border-bottom: 2px solid transparent; }
.run { background: linear-gradient(#76a9de, #76a9de) center 38px / 40px 2px no-repeat border-box; }
.tray { display: flex; align-items: center; gap: 8px; margin-left: auto; }
.ime { width: 18px; text-align: center; font-size: 13px; }
.imode { width: 14px; margin: 0 5px; background: #fff; color: #111; text-align: center; font: bold 12px/14px "Open Sans", sans-serif; }
.clock { display: flex; flex-direction: column; align-items: center; gap: 1px; width: 62px; font: 12px/16px "Open Sans", sans-serif; }
.peek { width: 4px; height: 40px; border-left: 1px solid #777; }
.mark { position: absolute; left: 5px; bottom: 2px; color: #000; font: 12px/16px "Liberation Serif", "Noto Sans CJK SC", serif; text-shadow: 0 0 1px #666; }
```
